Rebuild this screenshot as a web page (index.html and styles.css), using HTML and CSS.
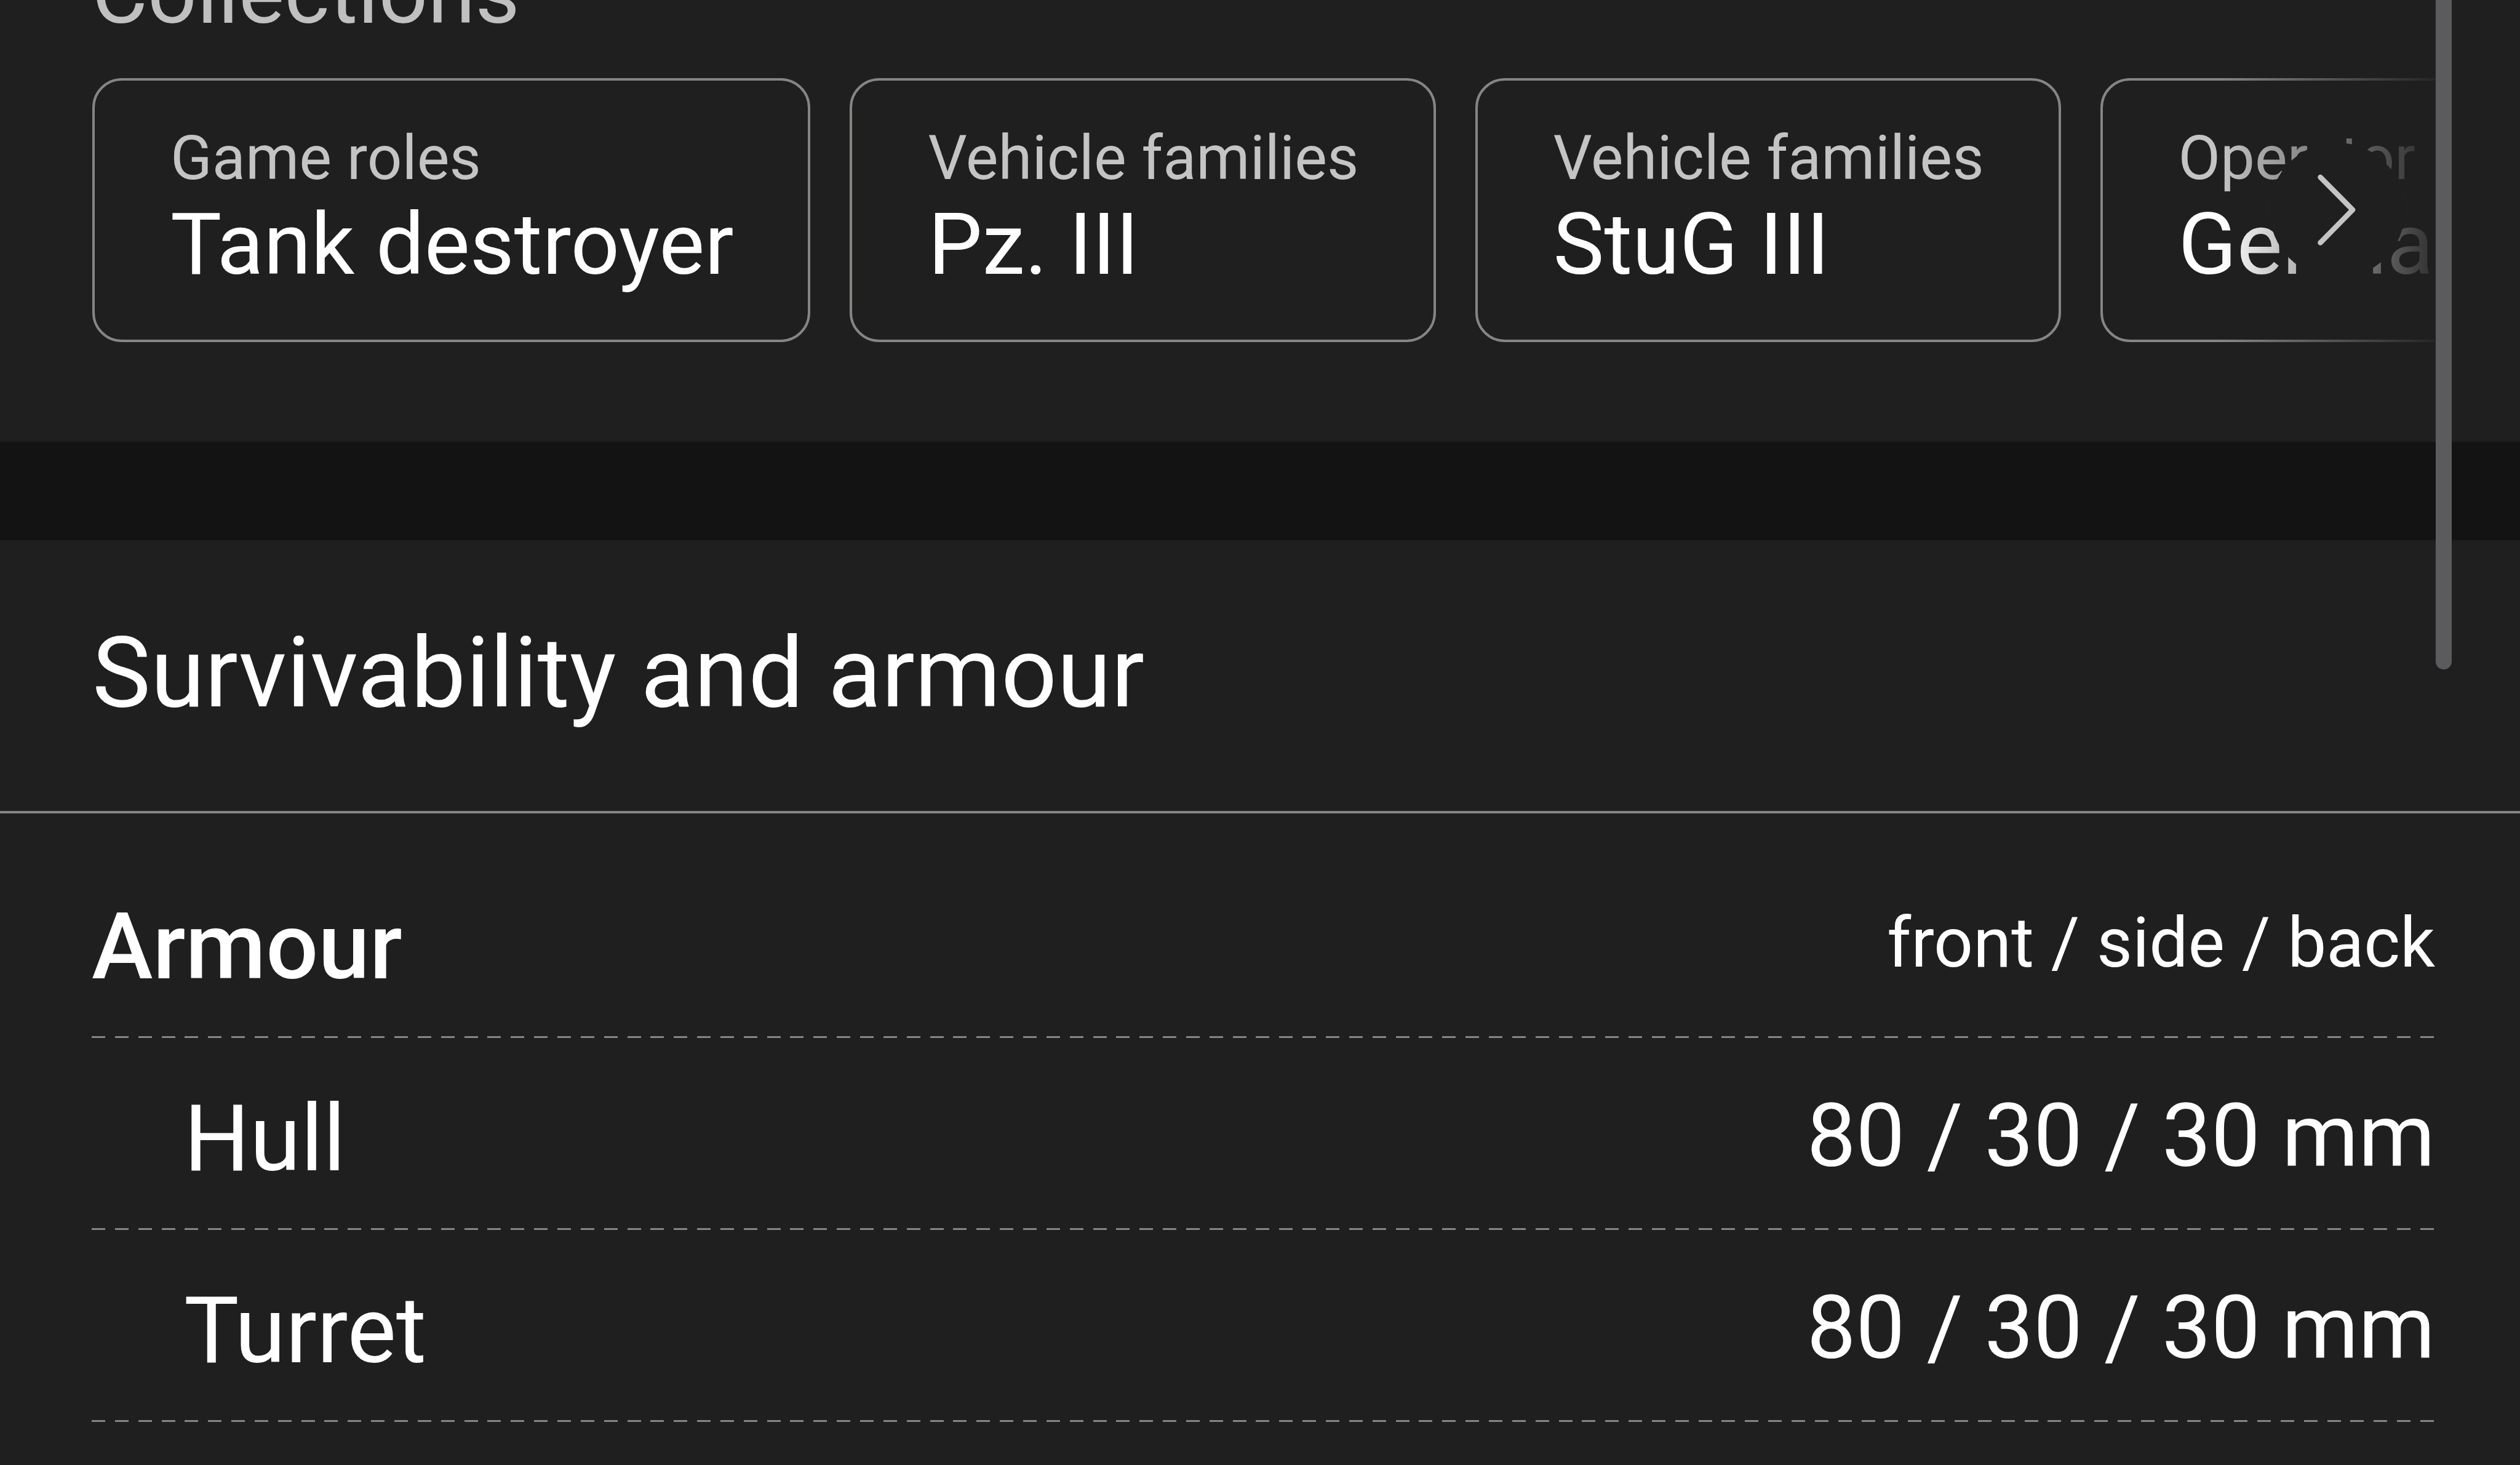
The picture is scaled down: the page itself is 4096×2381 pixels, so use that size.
FILE: index.html
```
<!DOCTYPE html>
<html lang="en">
<head>
  <meta charset="UTF-8">
  <meta name="viewport" content="width=device-width, initial-scale=1.0">
  <title>Survivability and armour</title>
  <link rel="stylesheet" href="styles.css">
</head>
<body>
  <section class="collections">
    <h3>Collections</h3>
    <div class="scroller">
      <div class="cards">
        <a class="card">
          <span class="card-label">Game roles</span>
          <span class="card-title">Tank destroyer</span>
        </a>
        <a class="card">
          <span class="card-label">Vehicle families</span>
          <span class="card-title">Pz. III</span>
        </a>
        <a class="card">
          <span class="card-label">Vehicle families</span>
          <span class="card-title">StuG III</span>
        </a>
        <a class="card">
          <span class="card-label">Operator</span>
          <span class="card-title">Germany</span>
        </a>
      </div>
      <div class="fade"></div>
      <button class="next" aria-label="Next">
        <svg viewBox="0 0 220 220"><path d="M82.5 56L135 109L82.5 162.5"/></svg>
      </button>
    </div>
  </section>

  <section class="block">
    <h2>Survivability and armour</h2>
    <div class="specs">
      <div class="row head">
        <span class="name">Armour</span>
        <span class="value">front / side / back</span>
      </div>
      <div class="row sub">
        <span class="name">Hull</span>
        <span class="value">80 / 30 / 30 mm</span>
      </div>
      <div class="row sub">
        <span class="name">Turret</span>
        <span class="value">80 / 30 / 30 mm</span>
      </div>
    </div>
  </section>

  <div class="scrollbar"></div>
</body>
</html>
```

FILE: styles.css
```
* {
  box-sizing: border-box;
}
body {
  margin: 0;
  height: 2381px;
  overflow: hidden;
  position: relative;
  background: #131313;
  color: #fff;
  font-family: Roboto, "Liberation Sans", sans-serif;
}
.collections {
  height: 718px;
  background: #1f1f1f;
  overflow: hidden;
}
h3 {
  margin: -81px 0 0;
  padding-left: 149px;
  height: 208px;
  line-height: 140px;
  font-size: 140px;
  font-weight: 400;
  color: #c0c0c0;
}
.scroller {
  position: relative;
  margin-left: 150px;
  width: 3808px;
  overflow: hidden;
}
.cards {
  display: flex;
  gap: 64px;
}
.card {
  flex: none;
  display: flex;
  flex-direction: column;
  height: 429px;
  padding: 69px 121px 0 123px;
  border: 4px solid #858583;
  border-radius: 48px;
  white-space: nowrap;
}
.card-label {
  font-size: 99.6px;
  line-height: 115px;
  color: #c4c4c4;
}
.card-title {
  font-size: 139.6px;
  line-height: 164px;
}
.fade {
  position: absolute;
  top: 0;
  right: 0;
  width: 350px;
  height: 100%;
  background: linear-gradient(to right, rgba(31,31,31,0), rgba(31,31,31,0.93));
}
.next {
  position: absolute;
  top: 105px;
  right: 49px;
  width: 220px;
  height: 220px;
  padding: 0;
  border: none;
  border-radius: 50%;
  background: #1f1f1f;
  box-shadow: 0 0 60px rgba(255,255,255,0.02);
}
.next svg {
  display: block;
  fill: none;
  stroke: #c4c4c4;
  stroke-width: 8.5;
  stroke-linecap: round;
  stroke-linejoin: round;
}
.block {
  margin-top: 160px;
  height: 1503px;
  background: #1f1f1f;
}
h2 {
  margin: 0;
  height: 444px;
  padding: 122px 0 0 150px;
  border-bottom: 4px solid #858583;
  font-size: 159.7px;
  line-height: 188px;
  font-weight: 400;
}
.specs {
  margin: 0 138px 0 149px;
}
.row {
  display: flex;
  justify-content: space-between;
  height: 312px;
  font-size: 150px;
  line-height: 180px;
  padding-top: 74px;
  background: repeating-linear-gradient(to right, #858583 0 22px, transparent 22px 37.85px) left bottom / 100% 3px no-repeat;
}
.row .value {
  font-size: 142px;
  line-height: 171px;
}
.head {
  height: 365px;
  padding-top: 127px;
}
.head .name {
  font-weight: 500;
}
.head .value {
  font-size: 112.3px;
  line-height: 168px;
}
.sub .name {
  padding-left: 150px;
}
.scrollbar {
  position: absolute;
  top: -100px;
  left: 3959px;
  width: 26px;
  height: 1188px;
  border-radius: 13px;
  background: #5b5b5d;
}
```
